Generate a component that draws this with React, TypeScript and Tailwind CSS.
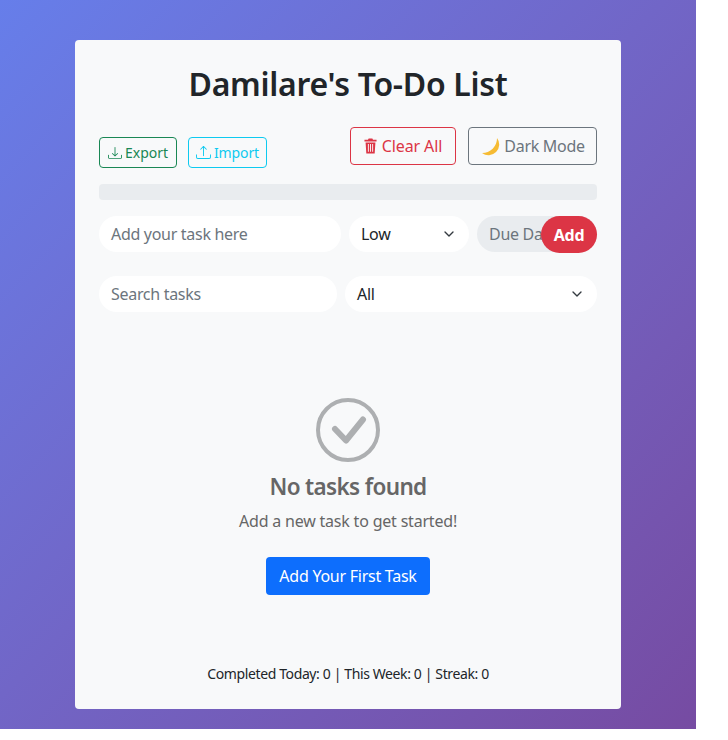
import { BsDownload, BsUpload } from "react-icons/bs";
import { ChevronDown } from "lucide-react";

const font = "font-['Noto_Sans',sans-serif]";

function Trash() {
  return (
    <svg width="13" height="16" viewBox="0 0 14 16" fill="currentColor" preserveAspectRatio="none">
      <path d="M.5 1.800h3.800L5 .6h4l.7 1.200h3.800v1.800H.5z" />
      <path fillRule="evenodd" d="M1.700 4.400h10.600l-.8 11H2.500zM4.200 6v7.800h1V6zm2.300 0v7.800h1V6zm2.300 0v7.800h1V6z" />
    </svg>
  );
}

function Moon() {
  return (
    <svg width="20" height="20" viewBox="0 0 20 20">
      <path d="M17 2A10.700 10.700 0 0 1 2 17 14.700 14.700 0 0 0 17 2z" fill="#f6bb33" />
    </svg>
  );
}

function CheckCircle() {
  return (
    <svg width="64" height="64" viewBox="0 0 64 64" fill="none" stroke="#adafb1">
      <circle cx="32" cy="32" r="30" strokeWidth="4" />
      <path d="M19 31 30 42.500 47 21.500" strokeWidth="6" strokeLinecap="round" strokeLinejoin="round" />
    </svg>
  );
}

function Sel({ label, className }: { label: string; className: string }) {
  return (
    <div className={`h-9 rounded-full bg-white flex items-center justify-between pl-3 pr-3 text-[#212529] ${className}`}>
      <span>{label}</span>
      <ChevronDown size={16} strokeWidth={2} className="text-[#343a40]" />
    </div>
  );
}

export default function App() {
  return (
    <div className={`${font} w-[696px] h-[729px] pt-10 bg-gradient-to-br from-[#667eea] to-[#764ba2] text-base tracking-[-0.3px]`}>
      <div className="mx-auto w-[546px] h-[669px] bg-[#f8f9fa] rounded px-6 pt-6 flex flex-col">
        <h1 className="text-center text-[32px] leading-10 font-semibold text-[#212529] tracking-[-0.3px]">Damilare's To-Do List</h1>

        <div className="mt-[23px] flex justify-between items-start">
          <div className="flex gap-[11px] mt-[10px]">
            <button className="h-[31px] w-[78px] flex items-center justify-center gap-[3px] rounded border border-[#198754] text-[#198754] text-sm tracking-[0px]">
              <BsDownload size={14} />Export
            </button>
            <button className="h-[31px] w-[79px] flex items-center justify-center gap-[3px] rounded border border-[#0dcaf0] text-[#0dcaf0] text-sm tracking-[-0.1px]">
              <BsUpload size={15} />Import
            </button>
          </div>
          <div className="flex gap-3">
            <button className="h-[38px] w-[106px] flex items-center justify-center gap-[5px] rounded border border-[#dc3545] text-[#dc3545] tracking-[-0.1px]">
              <Trash />Clear All
            </button>
            <button className="h-[38px] w-[129px] flex items-center justify-center gap-1 rounded border border-[#6c757d] text-[#6c757d]">
              <Moon />Dark Mode
            </button>
          </div>
        </div>

        <div className="mt-4 h-4 rounded bg-[#e9ecef]" />

        <div className="mt-4 flex items-start gap-2">
          <div className="h-9 w-[242px] rounded-full bg-white flex items-center px-3 text-[#6c757d]">Add your task here</div>
          <Sel label="Low" className="w-[120px]" />
          <div className="relative h-9 w-[120px] rounded-full bg-[#e9ecef] flex items-center px-3 text-[#6c757d]">
            Due Da
            <button className="absolute left-16 top-0 h-[37px] w-14 rounded-full bg-[#dc3545] text-white font-bold">Add</button>
          </div>
        </div>

        <div className="mt-6 flex gap-2">
          <div className="h-9 w-[238px] rounded-full bg-white flex items-center px-3 text-[#6c757d]">Search tasks</div>
          <Sel label="All" className="w-[252px]" />
        </div>

        <div className="mt-[86px] flex flex-col items-center">
          <CheckCircle />
          <h2 className="mt-[10px] text-[22.5px] leading-[29px] font-semibold text-[#666] tracking-[-0.65px]">No tasks found</h2>
          <p className="mt-2 leading-6 text-[#666] tracking-[-0.2px]">Add a new task to get started!</p>
          <button className="mt-6 h-[38px] w-[164px] rounded bg-[#0d6efd] text-white tracking-[-0.25px]">Add Your First Task</button>
        </div>

        <div className="mt-[68px] text-center text-sm leading-[21px] text-[#212529] tracking-[-0.38px]">Completed Today: 0 | This Week: 0 | Streak: 0</div>
      </div>
    </div>
  );
}
